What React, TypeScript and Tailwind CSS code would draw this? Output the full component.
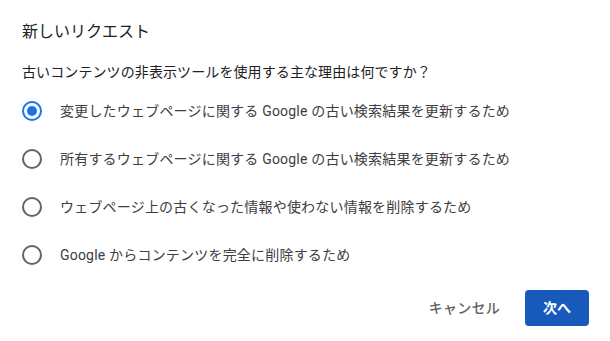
import React, { useState } from "react";

const options = [
  "変更したウェブページに関する Google の古い検索結果を更新するため",
  "所有するウェブページに関する Google の古い検索結果を更新するため",
  "ウェブページ上の古くなった情報や使わない情報を削除するため",
  "Google からコンテンツを完全に削除するため",
];

export default function App() {
  const [sel, setSel] = useState(0);
  return (
    <div
      className="w-[610px] h-[341px] bg-white flex flex-col pl-[22px] pr-[21px] pt-[20px]"
      style={{ fontFamily: 'Roboto, "Noto Sans CJK JP", sans-serif' }}
    >
      <div className="text-[16px] leading-[24px] text-[#202124]">新しいリクエスト</div>
      <div className="mt-[18px] text-[14px] leading-[20px] tracking-[0.1px] text-[#202124]">
        古いコンテンツの非表示ツールを使用する主な理由は何ですか？
      </div>
      <div className="mt-[5px] flex flex-col">
        {options.map((o, i) => (
          <button
            key={i}
            onClick={() => setSel(i)}
            className="h-[48px] flex items-center text-left"
          >
            <span
              className={
                "w-[20px] h-[20px] rounded-full border-2 flex items-center justify-center shrink-0 " +
                (sel === i ? "border-[#1a73e8]" : "border-[#5f6368]")
              }
            >
              {sel === i && <span className="w-[10px] h-[10px] rounded-full bg-[#1a73e8]" />}
            </span>
            <span className="ml-[18px] text-[14px] leading-[20px] tracking-[0.2px] text-[#3c4043]">{o}</span>
          </button>
        ))}
      </div>
      <div className="mt-[11px] flex justify-end items-center gap-[13px]">
        <button className="h-[36px] px-[12px] text-[14px] font-medium tracking-[0.25px] text-[#5f6368] rounded">
          キャンセル
        </button>
        <button className="h-[36px] w-[64px] text-[14px] font-bold text-white bg-[#185abc] rounded-[4px]">
          次へ
        </button>
      </div>
    </div>
  );
}
